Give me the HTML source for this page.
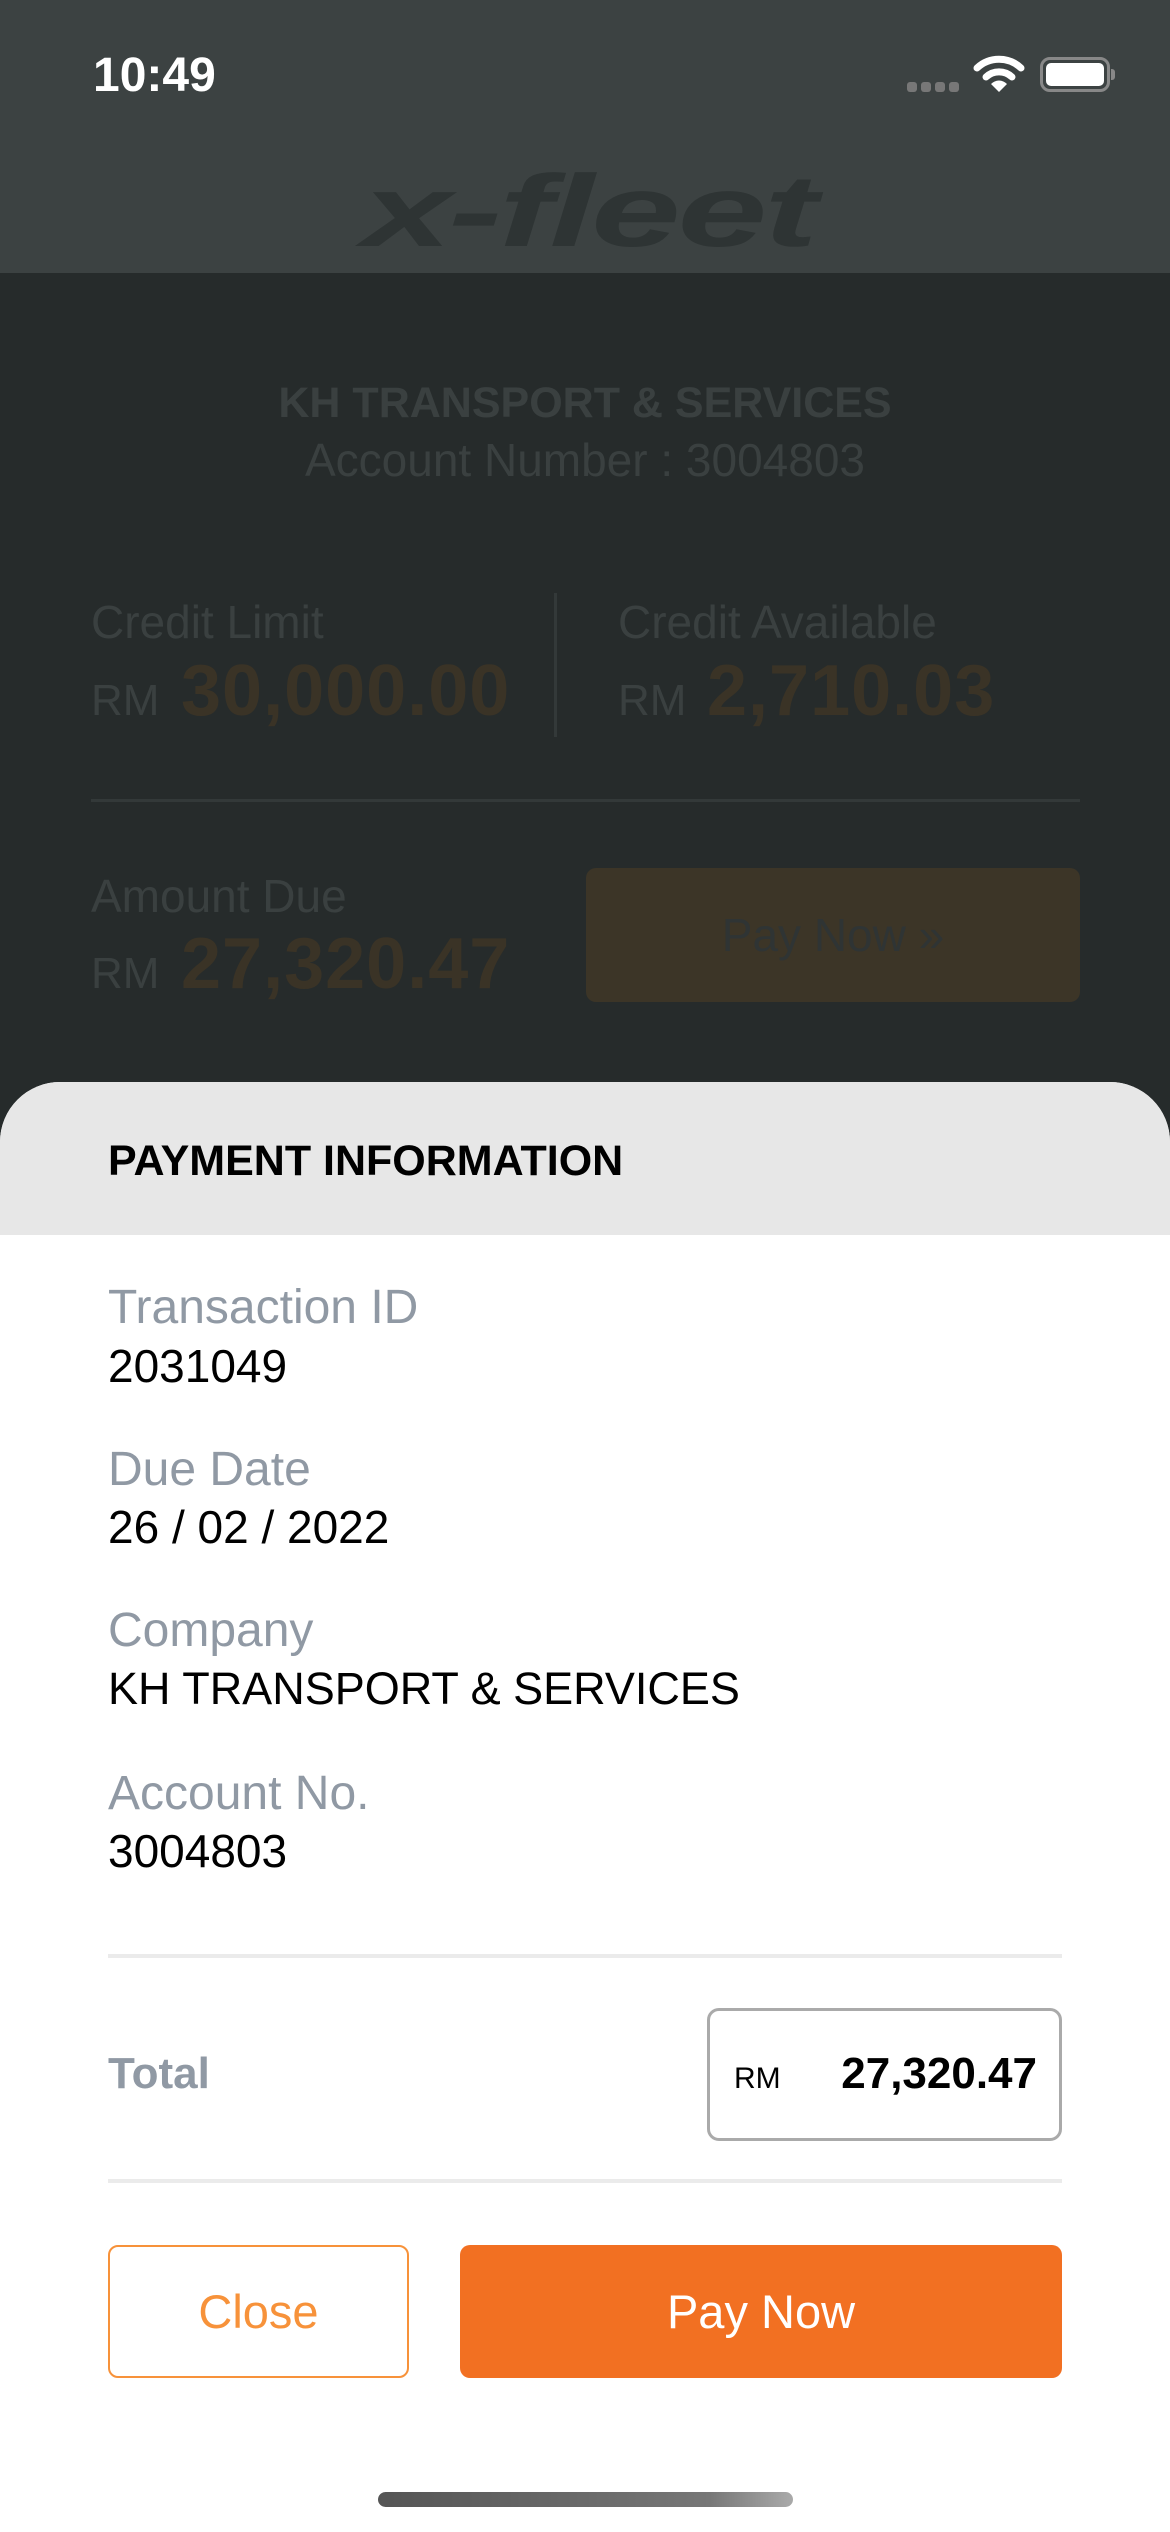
<!DOCTYPE html>
<html><head><meta charset="utf-8"><style>
*{margin:0;padding:0;box-sizing:border-box}
body{width:1170px;height:2532px;position:relative;overflow:hidden;background:#262b2b;font-family:"Liberation Sans",sans-serif}
.a{position:absolute;white-space:nowrap;line-height:1}
.n{font-size:72px;font-weight:bold;color:#3a3326;letter-spacing:1px}
</style></head><body>
<div class="a" style="left:0;top:0;width:1170px;height:273px;background:#3c4242"></div>
<div class="a" style="left:93px;top:52px;font-size:48px;font-weight:bold;color:#fff">10:49</div>
<div class="a" style="left:907px;top:82px;width:10px;height:10px;border-radius:3px;background:#777"></div>
<div class="a" style="left:921px;top:82px;width:10px;height:10px;border-radius:3px;background:#777"></div>
<div class="a" style="left:935px;top:82px;width:10px;height:10px;border-radius:3px;background:#777"></div>
<div class="a" style="left:949px;top:82px;width:10px;height:10px;border-radius:3px;background:#777"></div>
<svg class="a" style="left:973px;top:54px" width="52" height="40" viewBox="0 0 52 40"><path d="M4 14 A32 32 0 0 1 48 14" stroke="#fff" stroke-width="7" fill="none" stroke-linecap="round"/><path d="M13 23 A19 19 0 0 1 39 23" stroke="#fff" stroke-width="7" fill="none" stroke-linecap="round"/><path d="M18 30 L26 38 L34 30 A11 11 0 0 0 18 30Z" fill="#fff"/></svg>
<div class="a" style="left:1040px;top:57px;width:70px;height:35px;border:3px solid #888;border-radius:10px"></div>
<div class="a" style="left:1046px;top:63px;width:58px;height:23px;background:#fff;border-radius:5px"></div>
<div class="a" style="left:1111px;top:69px;width:4px;height:11px;background:#888;border-radius:0 3px 3px 0"></div>
<div class="a" style="left:362px;top:160px;font-size:102px;font-weight:bold;font-style:italic;color:#2e3434;transform:scaleX(1.58);transform-origin:left top;letter-spacing:-2px">x-fleet</div>
<div class="a" style="left:0;top:382px;width:1170px;text-align:center;font-size:43px;font-weight:bold;color:#3a4040">KH TRANSPORT &amp; SERVICES</div>
<div class="a" style="left:0;top:437px;width:1170px;text-align:center;font-size:46px;color:#3a4040">Account Number : 3004803</div>
<div class="a" style="left:91px;top:599px;font-size:46px;color:#3a4040">Credit Limit</div>
<div class="a" style="left:91px;top:679px;font-size:44px;color:#3a4040">RM</div>
<div class="a n" style="left:181px;top:655px">30,000.00</div>
<div class="a" style="left:554px;top:593px;width:3px;height:144px;background:#333939"></div>
<div class="a" style="left:618px;top:599px;font-size:46px;color:#3a4040">Credit Available</div>
<div class="a" style="left:618px;top:679px;font-size:44px;color:#3a4040">RM</div>
<div class="a n" style="left:707px;top:655px">2,710.03</div>
<div class="a" style="left:91px;top:799px;width:989px;height:3px;background:#333939"></div>
<div class="a" style="left:91px;top:873px;font-size:46px;color:#3a4040">Amount Due</div>
<div class="a" style="left:91px;top:952px;font-size:44px;color:#3a4040">RM</div>
<div class="a n" style="left:181px;top:928px">27,320.47</div>
<div class="a" style="left:586px;top:868px;width:494px;height:134px;background:#3c3527;border-radius:10px;color:#2f3434;font-size:46px;text-align:center;line-height:134px">Pay Now »</div>

<div class="a" style="left:0;top:1082px;width:1170px;height:1450px;background:#fff;border-radius:60px 60px 0 0;overflow:hidden">
<div style="height:153px;background:#e7e7e7"></div>
</div>
<div class="a" style="left:108px;top:1140px;font-size:43px;font-weight:bold;color:#000">PAYMENT INFORMATION</div>
<div class="a" style="left:108px;top:1284px;font-size:48px;color:#9099a4">Transaction ID</div>
<div class="a" style="left:108px;top:1343px;font-size:46px;color:#000">2031049</div>
<div class="a" style="left:108px;top:1446px;font-size:48px;color:#9099a4">Due Date</div>
<div class="a" style="left:108px;top:1504px;font-size:46px;color:#000">26 / 02 / 2022</div>
<div class="a" style="left:108px;top:1607px;font-size:48px;color:#9099a4">Company</div>
<div class="a" style="left:108px;top:1666px;font-size:45px;color:#000">KH TRANSPORT &amp; SERVICES</div>
<div class="a" style="left:108px;top:1770px;font-size:48px;color:#9099a4">Account No.</div>
<div class="a" style="left:108px;top:1828px;font-size:46px;color:#000">3004803</div>
<div class="a" style="left:108px;top:1954px;width:954px;height:4px;background:#ebebeb"></div>
<div class="a" style="left:108px;top:2052px;font-size:44px;font-weight:bold;color:#9099a4">Total</div>
<div class="a" style="left:707px;top:2008px;width:355px;height:133px;border:3px solid #aaa;border-radius:12px"></div>
<div class="a" style="left:734px;top:2064px;font-size:30px;color:#000">RM</div>
<div class="a" style="left:780px;top:2052px;width:257px;text-align:right;font-size:44px;font-weight:bold;color:#000">27,320.47</div>
<div class="a" style="left:108px;top:2179px;width:954px;height:4px;background:#ebebeb"></div>
<div class="a" style="left:108px;top:2245px;width:301px;height:133px;border:2px solid #f7923a;border-radius:10px;text-align:center;line-height:129px;font-size:47px;color:#f7923a">Close</div>
<div class="a" style="left:460px;top:2245px;width:602px;height:133px;background:#f27022;border-radius:10px;text-align:center;line-height:133px;font-size:47px;color:#fff">Pay Now</div>
<div class="a" style="left:378px;top:2492px;width:415px;height:15px;border-radius:8px;background:linear-gradient(90deg,#555,#777 80%,#aaa)"></div>
</body></html>
